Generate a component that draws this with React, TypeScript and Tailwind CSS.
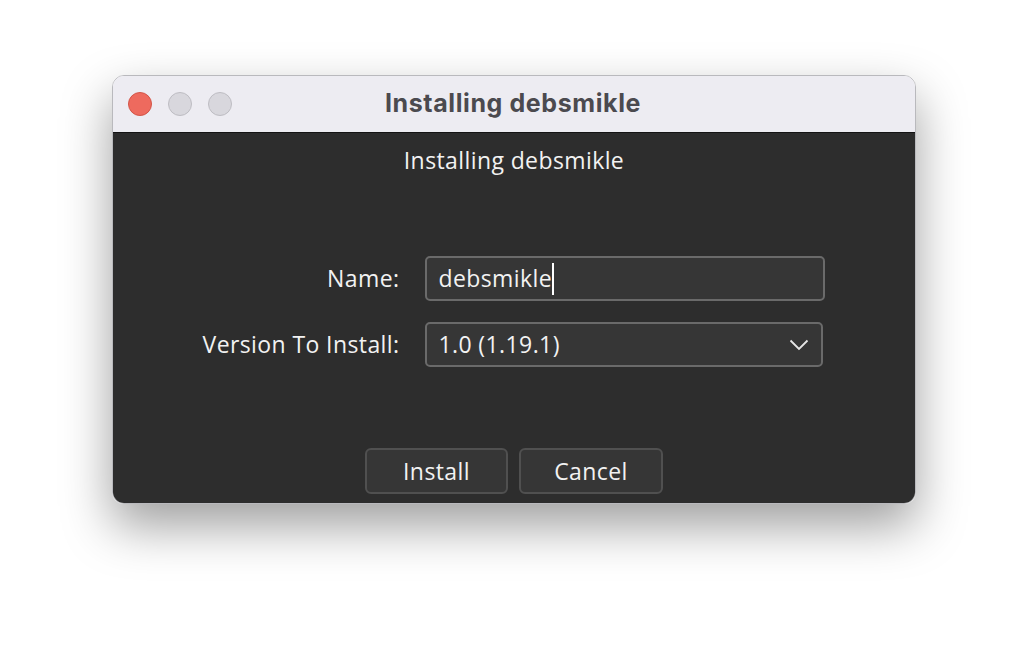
import React from "react";

export default function App() {
  const ui = { fontFamily: '"Open Sans", "Noto Sans", sans-serif' };
  return (
    <div className="w-[1028px] h-[652px] bg-white flex items-start justify-center pt-[75px]" style={ui}>
      <div className="w-[804px] h-[429px] rounded-[12px] overflow-hidden flex flex-col border border-[#b9b9bd] shadow-[0_22px_50px_rgba(0,0,0,0.38)]">
        <div className="h-[57px] bg-[#edecf2] relative flex items-center justify-center shrink-0 border-b border-[#141414]">
          <div className="absolute left-[15px] top-[16px] flex gap-[16px]">
            <div className="w-[24px] h-[24px] rounded-full bg-[#ee6a5e] border border-[#d35548]" />
            <div className="w-[24px] h-[24px] rounded-full bg-[#d8d7dd] border border-[#bebdc3]" />
            <div className="w-[24px] h-[24px] rounded-full bg-[#d8d7dd] border border-[#bebdc3]" />
          </div>
          <div className="text-[25px] tracking-[0.6px] font-bold text-[#4b4a4f] ml-[-2px]" style={{ fontFamily: 'Inter, "Liberation Sans", Arial, sans-serif' }}>
            Installing debsmikle
          </div>
        </div>
        <div className="flex-1 bg-[#2d2d2d] flex flex-col items-center text-[#f2f2f2] text-[23px] tracking-[0.4px]">
          <div className="mt-[11px] leading-[32px]">Installing debsmikle</div>
          <div className="grid grid-cols-[auto_400px] gap-x-[26px] gap-y-[21px] items-center mt-[80px]">
            <div className="text-right">Name:</div>
            <div className="h-[45px] rounded-[5px] border-2 border-[#6a6a6a] bg-[#363636] flex items-center pl-[11px] pr-[12px]">
              <span>debsmikle</span>
              <span className="inline-block w-[2px] h-[32px] bg-white ml-[0px]" />
            </div>
            <div className="text-right">Version To Install:</div>
            <div className="h-[45px] w-[398px] rounded-[5px] border-2 border-[#6a6a6a] bg-[#363636] flex items-center justify-between pl-[11px] pr-[12px]">
              <span>1.0 (1.19.1)</span>
              <svg width="20" height="12" viewBox="0 0 20 12" fill="none">
                <path d="M1.5 1.5 L10 10 L18.5 1.5" stroke="#e6e6e6" strokeWidth="1.8" />
              </svg>
            </div>
          </div>
          <div className="flex gap-[11px] mt-[81px]">
            <div className="w-[143px] h-[46px] rounded-[6px] border-2 border-[#505050] bg-[#363636] flex items-center justify-center">Install</div>
            <div className="w-[144px] h-[46px] rounded-[6px] border-2 border-[#505050] bg-[#363636] flex items-center justify-center">Cancel</div>
          </div>
        </div>
      </div>
    </div>
  );
}
